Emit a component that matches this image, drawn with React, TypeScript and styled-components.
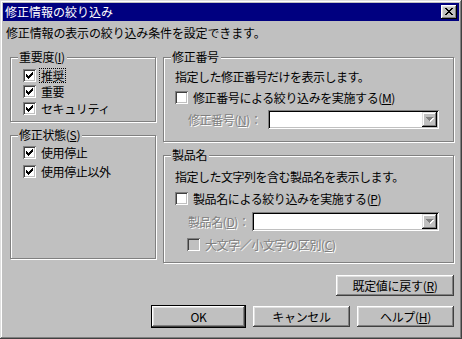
import React from "react";
import styled, { createGlobalStyle } from "styled-components";

const GlobalStyle = createGlobalStyle`
  html, body {
    margin: 0;
    padding: 0;
    background: #c0c0c0;
  }
  body {
    font-family: "Noto Sans CJK JP", "Liberation Sans", sans-serif;
    font-size: 12px;
    line-height: 14px;
    color: #000;
  }
`;

const Window = styled.div`
  box-sizing: border-box;
  width: 462px;
  height: 339px;
  padding: 3px;
  background: #c0c0c0;
  box-shadow: inset -1px -1px #404040, inset 1px 1px #dfdfdf,
    inset -2px -2px #808080, inset 2px 2px #fff;
  display: flex;
  flex-direction: column;
`;

const TitleBar = styled.div`
  height: 18px;
  background: #000080;
  color: #fff;
  display: flex;
  align-items: center;
  justify-content: space-between;
  padding: 0 2px 0 2px;
`;

const TitleText = styled.span`
  line-height: 18px;
`;

const CloseButton = styled.div`
  box-sizing: border-box;
  width: 16px;
  height: 14px;
  background: #c0c0c0;
  box-shadow: inset -1px -1px #000, inset 1px 1px #fff,
    inset -2px -2px #808080, inset 2px 2px #dfdfdf;
  display: flex;
  align-items: center;
  justify-content: center;
  padding-bottom: 1px;
`;

const Description = styled.div`
  margin: 5px 0 0 3px;
  height: 16px;
  letter-spacing: -0.15px;
`;

const Columns = styled.div`
  display: grid;
  grid-template-columns: 146px 291px;
  column-gap: 7px;
  margin: 8px 0 0 7px;
  align-items: start;
`;

const Column = styled.div`
  display: flex;
  flex-direction: column;
  gap: 6px;
`;

const Group = styled.fieldset<{ $h: number }>`
  box-sizing: border-box;
  height: ${(p) => p.$h}px;
  margin: 0;
  padding: 0;
  min-width: 0;
  border: 1px solid #808080;
  box-shadow: inset 1px 1px #fff, 1px 1px #fff;
`;

const Legend = styled.legend`
  margin-left: 7px;
  padding: 0 2px 0 1px;
  line-height: 14px;
  background: #c0c0c0;
  letter-spacing: -0.3px;
`;

const GroupBody = styled.div<{ $top: number; $left: number; $gap?: number }>`
  display: flex;
  flex-direction: column;
  gap: ${(p) => p.$gap ?? 0}px;
  padding: ${(p) => p.$top}px 0 0 ${(p) => p.$left}px;
`;

const Row = styled.div<{ $indent?: number; $h?: number }>`
  display: flex;
  align-items: center;
  height: ${(p) => p.$h ?? 16}px;
  margin-left: ${(p) => p.$indent ?? 0}px;
  letter-spacing: -0.4px;
`;

const Box = styled.div<{ $disabled?: boolean }>`
  box-sizing: border-box;
  width: 13px;
  height: 13px;
  flex: none;
  background: ${(p) => (p.$disabled ? "#c0c0c0" : "#fff")};
  box-shadow: inset 1px 1px #808080, inset -1px -1px #fff,
    inset 2px 2px #404040, inset -2px -2px #c0c0c0;
  display: flex;
  align-items: center;
  justify-content: center;
  margin-right: 4px;
`;

const Label = styled.span<{ $disabled?: boolean; $focus?: boolean }>`
  white-space: nowrap;
  line-height: 13px;
  padding: 0 1px;
  outline: ${(p) => (p.$focus ? "1px dotted #000" : "none")};
  color: ${(p) => (p.$disabled ? "#808080" : "#000")};
  text-shadow: ${(p) => (p.$disabled ? "1px 1px #fff" : "none")};
`;

const Mnemonic = styled.u`
  text-underline-offset: 1px;
`;

const Combo = styled.div<{ $w: number }>`
  box-sizing: border-box;
  width: ${(p) => p.$w}px;
  height: 19px;
  background: #fff;
  box-shadow: inset 1px 1px #808080, inset -1px -1px #fff,
    inset 2px 2px #000, inset -2px -2px #c0c0c0;
  display: flex;
  justify-content: flex-end;
  padding: 2px;
  margin-left: auto;
  margin-right: 14px;
`;

const DropButton = styled.div`
  box-sizing: border-box;
  width: 15px;
  height: 15px;
  background: #c0c0c0;
  box-shadow: inset -1px -1px #000, inset 1px 1px #dfdfdf,
    inset -2px -2px #808080, inset 2px 2px #fff;
  display: flex;
  align-items: center;
  justify-content: center;
`;

const Info = styled.div`
  height: 16px;
  display: flex;
  align-items: center;
  letter-spacing: -0.5px;
`;

const ButtonRow = styled.div<{ $top: number }>`
  display: flex;
  justify-content: flex-end;
  gap: 7px;
  margin: ${(p) => p.$top}px 5px 0 0;
`;

const Button = styled.div<{ $w: number; $default?: boolean }>`
  box-sizing: border-box;
  width: ${(p) => p.$w}px;
  height: ${(p) => (p.$default ? 23 : 21)}px;
  margin-top: ${(p) => (p.$default ? -1 : 0)}px;
  display: flex;
  align-items: center;
  justify-content: center;
  letter-spacing: -0.3px;
  background: #c0c0c0;
  border: ${(p) => (p.$default ? "1px solid #000" : "none")};
  box-shadow: inset -1px -1px #404040, inset 1px 1px #fff,
    inset -2px -2px #808080, inset 2px 2px #dfdfdf;
`;

const CHECK_COLS: [number, number][] = [
  [0, 2], [1, 3], [2, 4], [3, 3], [4, 2], [5, 1], [6, 0],
];

function CheckMark() {
  return (
    <svg width="7" height="7" viewBox="0 0 7 7" shapeRendering="crispEdges">
      {CHECK_COLS.map(([x, y]) => (
        <rect key={x} x={x} y={y} width="1" height="3" fill="#000" />
      ))}
    </svg>
  );
}

const X_ROWS: number[][] = [
  [0, 1, 6, 7], [1, 2, 5, 6], [2, 3, 4, 5], [3, 4], [2, 3, 4, 5], [1, 2, 5, 6], [0, 1, 6, 7],
];

function CloseGlyph() {
  return (
    <svg width="8" height="7" viewBox="0 0 8 7" shapeRendering="crispEdges">
      {X_ROWS.map((xs, y) =>
        xs.map((x) => <rect key={`${x}-${y}`} x={x} y={y} width="1" height="1" fill="#000" />)
      )}
    </svg>
  );
}

function Arrow() {
  return (
    <svg width="8" height="5" viewBox="0 0 8 5" shapeRendering="crispEdges">
      <path d="M1 1h7v1h-1v1h-1v1h-1v1h-1v-1h-1v-1h-1v-1h-1z" fill="#fff" />
      <path d="M0 0h7v1h-1v1h-1v1h-1v1h-1v-1h-1v-1h-1v-1h-1z" fill="#808080" />
    </svg>
  );
}

function Check({
  checked,
  disabled,
  focus,
  children,
  indent,
  h,
}: {
  checked?: boolean;
  disabled?: boolean;
  focus?: boolean;
  children: React.ReactNode;
  indent?: number;
  h?: number;
}) {
  return (
    <Row $indent={indent} $h={h}>
      <Box $disabled={disabled}>{checked && <CheckMark />}</Box>
      <Label $disabled={disabled} $focus={focus}>
        {children}
      </Label>
    </Row>
  );
}

function ComboRow({ label, width }: { label: React.ReactNode; width: number }) {
  return (
    <Row $indent={12} $h={20}>
      <Label $disabled>{label}</Label>
      <Combo $w={width}>
        <DropButton>
          <Arrow />
        </DropButton>
      </Combo>
    </Row>
  );
}

export default function App() {
  return (
    <>
      <GlobalStyle />
      <Window>
        <TitleBar>
          <TitleText>修正情報の絞り込み</TitleText>
          <CloseButton>
            <CloseGlyph />
          </CloseButton>
        </TitleBar>
        <Description>修正情報の表示の絞り込み条件を設定できます。</Description>
        <Columns>
          <Column>
            <Group $h={72}>
              <Legend>
                重要度(<Mnemonic>I</Mnemonic>)
              </Legend>
              <GroupBody $top={3} $left={12} $gap={0.5}>
                <Check checked focus>
                  推奨
                </Check>
                <Check checked>重要</Check>
                <Check checked>セキュリティ</Check>
              </GroupBody>
            </Group>
            <Group $h={131}>
              <Legend>
                修正状態(<Mnemonic>S</Mnemonic>)
              </Legend>
              <GroupBody $top={2} $left={12} $gap={3}>
                <Check checked>使用停止</Check>
                <Check checked>使用停止以外</Check>
              </GroupBody>
            </Group>
          </Column>
          <Column>
            <Group $h={92}>
              <Legend>修正番号</Legend>
              <GroupBody $top={5} $left={11} $gap={4}>
                <Info>指定した修正番号だけを表示します。</Info>
                <Check checked={false}>
                  修正番号による絞り込みを実施する(<Mnemonic>M</Mnemonic>)
                </Check>
                <ComboRow
                  width={171}
                  label={
                    <>
                      修正番号(<Mnemonic>N</Mnemonic>)：
                    </>
                  }
                />
              </GroupBody>
            </Group>
            <Group $h={115}>
              <Legend>製品名</Legend>
              <GroupBody $top={7} $left={11} $gap={5}>
                <Info>指定した文字列を含む製品名を表示します。</Info>
                <Check checked={false}>
                  製品名による絞り込みを実施する(<Mnemonic>P</Mnemonic>)
                </Check>
                <ComboRow
                  width={187}
                  label={
                    <>
                      製品名(<Mnemonic>D</Mnemonic>)：
                    </>
                  }
                />
                <Check disabled indent={12}>
                  大文字／小文字の区別(<Mnemonic>C</Mnemonic>)
                </Check>
              </GroupBody>
            </Group>
          </Column>
        </Columns>
        <ButtonRow $top={12}>
          <Button $w={118}>
            既定値に戻す(<Mnemonic>R</Mnemonic>)
          </Button>
        </ButtonRow>
        <ButtonRow $top={10}>
          <Button $w={95} $default>
            OK
          </Button>
          <Button $w={97}>キャンセル</Button>
          <Button $w={97}>
            ヘルプ(<Mnemonic>H</Mnemonic>)
          </Button>
        </ButtonRow>
      </Window>
    </>
  );
}
